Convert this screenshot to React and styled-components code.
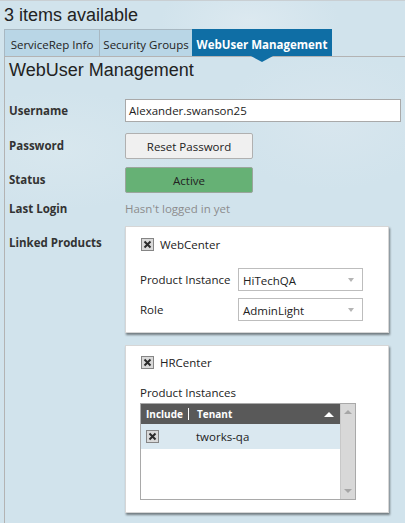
import styled, { createGlobalStyle } from "styled-components";

const GlobalStyle = createGlobalStyle`
  html, body {
    margin: 0;
    padding: 0;
  }
  body {
    width: 405px;
    height: 523px;
    overflow: hidden;
    background:
      radial-gradient(ellipse 90px 40px at 250px 20px, #dce9f0 0%, rgba(220, 233, 240, 0) 100%),
      radial-gradient(ellipse 120px 60px at 60px 150px, #d8e7ee 0%, rgba(216, 231, 238, 0) 100%),
      radial-gradient(ellipse 110px 70px at 330px 120px, #d8e6ee 0%, rgba(216, 230, 238, 0) 100%),
      #d1e3ec;
    font-family: "Open Sans", "Noto Sans", sans-serif;
    color: #333;
  }
`;

const Page = styled.div`
  padding-top: 1px;
  border-top: 1px solid #c9cfd3;
`;

const Title = styled.h1`
  margin: 2px 0 0 4px;
  height: 25px;
  font-family: "Liberation Sans", Arial, sans-serif;
  font-size: 18px;
  font-weight: normal;
  line-height: 22px;
  color: #222;
`;

const Tabs = styled.div`
  display: flex;
  margin-left: 5px;
  height: 27px;
`;

const Tab = styled.div`
  position: relative;
  box-sizing: border-box;
  width: ${(p) => p.$w}px;
  height: 27px;
  display: flex;
  align-items: center;
  justify-content: center;
  border: 1px solid #a8b8c2;
  border-bottom: none;
  margin-left: -1px;
  background: ${(p) => (p.$active ? "#0f6ea5" : "#b9d6e6")};
  color: ${(p) => (p.$active ? "#fff" : "#222")};
  font-size: 11.5px;
  font-weight: ${(p) => (p.$active ? 700 : 400)};
  padding-top: 2px;

  ${(p) =>
    p.$active &&
    `
    border-color: #0f6ea5;
    &::after {
      content: "";
      position: absolute;
      left: 50%;
      bottom: -6px;
      margin-left: -11px;
      border-left: 11px solid transparent;
      border-right: 11px solid transparent;
      border-top: 6px solid #0f6ea5;
      z-index: 2;
    }
  `}
`;

const Panel = styled.div`
  margin-left: 4px;
  border-left: 1px solid #b3b3b3;
  border-top: 1px solid #b3b3b3;
  padding: 2px 0 0 4px;
  height: 480px;
`;

const Heading = styled.h2`
  margin: 0;
  font-family: "Liberation Sans", Arial, sans-serif;
  font-size: 18px;
  font-weight: normal;
  line-height: 22px;
  color: #222;
`;

const Form = styled.div`
  margin-top: 18px;
  display: flex;
  flex-direction: column;
`;

const Row = styled.div`
  display: flex;
  align-items: ${(p) => (p.$top ? "flex-start" : "center")};
  min-height: ${(p) => p.$h || 16}px;
  margin-top: ${(p) => p.$mt || 0}px;
`;

const Label = styled.div`
  width: 116px;
  flex: none;
  font-size: 11.5px;
  font-weight: 700;
  line-height: 16px;
  color: #333;
  margin-top: ${(p) => p.$mt || 0}px;
`;

const TextInput = styled.div`
  box-sizing: border-box;
  width: 276px;
  height: 23px;
  border: 1px solid #a9a9a9;
  background: #fff;
  padding: 0 3px;
  display: flex;
  align-items: center;
  font-size: 11.5px;
  color: #222;
`;

const Button = styled.div`
  box-sizing: border-box;
  width: 128px;
  height: 26px;
  border: 1px solid ${(p) => (p.$green ? "#9aa59c" : "#b0b0b0")};
  border-radius: 2px;
  background: ${(p) => (p.$green ? "#66b175" : "#f0f0f0")};
  display: flex;
  align-items: center;
  justify-content: center;
  font-size: 11.5px;
  color: #222;
  padding-top: 1px;
`;

const Muted = styled.div`
  font-size: 11.5px;
  line-height: 16px;
  color: #8c8c8c;
`;

const Cards = styled.div`
  display: flex;
  flex-direction: column;
  gap: 12px;
`;

const Card = styled.div`
  box-sizing: border-box;
  width: 264px;
  background: #fff;
  border: 1px solid #d6d6d6;
  box-shadow: 1px 2px 2px rgba(0, 0, 0, 0.45);
  padding: ${(p) => p.$pad || "11px 14px 11px 14px"};
`;

const CheckRow = styled.div`
  display: flex;
  align-items: center;
  gap: 6px;
  height: 13px;
  font-size: 11.5px;
  color: #222;
  padding-left: ${(p) => p.$pl || 0}px;
`;

const Box = styled.span`
  box-sizing: border-box;
  width: 13px;
  height: 13px;
  flex: none;
  border: 1px solid #858585;
  background: #d9d9d9;
  display: flex;
  align-items: center;
  justify-content: center;
`;

const FieldRow = styled.div`
  display: flex;
  align-items: center;
  margin-top: ${(p) => p.$mt || 0}px;
`;

const FieldLabel = styled.div`
  width: 98px;
  flex: none;
  font-size: 11.5px;
  color: #222;
`;

const Select = styled.div`
  box-sizing: border-box;
  width: 125px;
  height: 23px;
  border: 1px solid #bdbdbd;
  background: #fff;
  display: flex;
  align-items: center;
  justify-content: space-between;
  padding: 1px 8px 0 4px;
  font-size: 11.5px;
  color: #222;

  &::after {
    content: "";
    border-left: 3.5px solid transparent;
    border-right: 3.5px solid transparent;
    border-top: 4px solid #b5b5b5;
  }
`;

const SubLabel = styled.div`
  margin-top: 16px;
  font-size: 11.5px;
  line-height: 16px;
  color: #222;
`;

const Grid = styled.div`
  margin-top: 2px;
  box-sizing: border-box;
  width: 216px;
  height: 97px;
  border: 1px solid #a9a9a9;
  display: flex;
`;

const GridBody = styled.div`
  flex: 1;
  display: flex;
  flex-direction: column;
`;

const GridHead = styled.div`
  height: 20px;
  background: #595959;
  color: #fff;
  font-size: 10px;
  font-weight: 700;
  display: flex;
  align-items: center;
  padding: 0 6px 0 5px;
`;

const HeadCell = styled.span`
  width: ${(p) => (p.$w ? p.$w + "px" : "auto")};
  flex: ${(p) => (p.$w ? "none" : 1)};
  white-space: nowrap;
`;

const Sep = styled.span`
  width: 1px;
  height: 12px;
  flex: none;
  background: #fff;
  margin: 0 8px 0 0;
`;

const SortUp = styled.span`
  border-left: 5px solid transparent;
  border-right: 5px solid transparent;
  border-bottom: 5px solid #fff;
`;

const GridRow = styled.div`
  height: 25px;
  background: #dae8f0;
  display: flex;
  align-items: center;
  padding-left: 5px;
  font-size: 11.5px;
  color: #222;
`;

const RowText = styled.span`
  margin-left: 37px;
`;

const Scrollbar = styled.div`
  width: 15px;
  flex: none;
  background: #d8d8d8;
  border-left: 1px solid #c8c8c8;
  display: flex;
  flex-direction: column;
  justify-content: space-between;
  align-items: center;
  padding: 6px 0;
  box-sizing: border-box;
`;

const Arrow = styled.span`
  border-left: 4px solid transparent;
  border-right: 4px solid transparent;
  ${(p) => (p.$down ? "border-top" : "border-bottom")}: 4px solid #a6a6a6;
`;

const Check = () => (
  <Box>
    <svg width="9" height="9" viewBox="0 0 9 9">
      <path d="M1.5 1.5 L7.5 7.5 M7.5 1.5 L1.5 7.5" stroke="#2b2b2b" strokeWidth="2" />
    </svg>
  </Box>
);

export default function App() {
  return (
    <>
      <GlobalStyle />
      <Page>
        <Title>3 items available</Title>
        <Tabs>
          <Tab $w={96}>ServiceRep Info</Tab>
          <Tab $w={94}>Security Groups</Tab>
          <Tab $w={140} $active>
            WebUser Management
          </Tab>
        </Tabs>
        <Panel>
          <Heading>WebUser Management</Heading>
          <Form>
            <Row $h={23}>
              <Label>Username</Label>
              <TextInput>Alexander.swanson25</TextInput>
            </Row>
            <Row $h={26} $mt={11}>
              <Label>Password</Label>
              <Button>Reset Password</Button>
            </Row>
            <Row $h={26} $mt={8}>
              <Label>Status</Label>
              <Button $green>Active</Button>
            </Row>
            <Row $mt={8}>
              <Label>Last Login</Label>
              <Muted>Hasn't logged in yet</Muted>
            </Row>
            <Row $top $mt={9}>
              <Label $mt={9}>Linked Products</Label>
              <Cards>
                <Card>
                  <CheckRow $pl={1}>
                    <Check />
                    WebCenter
                  </CheckRow>
                  <FieldRow $mt={17}>
                    <FieldLabel>Product Instance</FieldLabel>
                    <Select>HiTechQA</Select>
                  </FieldRow>
                  <FieldRow $mt={7}>
                    <FieldLabel>Role</FieldLabel>
                    <Select>AdminLight</Select>
                  </FieldRow>
                </Card>
                <Card $pad="10px 14px 12px 14px">
                  <CheckRow $pl={1}>
                    <Check />
                    HRCenter
                  </CheckRow>
                  <SubLabel>Product Instances</SubLabel>
                  <Grid>
                    <GridBody>
                      <GridHead>
                        <HeadCell $w={42}>Include</HeadCell>
                        <Sep />
                        <HeadCell>Tenant</HeadCell>
                        <SortUp />
                      </GridHead>
                      <GridRow>
                        <Check />
                        <RowText>tworks-qa</RowText>
                      </GridRow>
                    </GridBody>
                    <Scrollbar>
                      <Arrow />
                      <Arrow $down />
                    </Scrollbar>
                  </Grid>
                </Card>
              </Cards>
            </Row>
          </Form>
        </Panel>
      </Page>
    </>
  );
}
